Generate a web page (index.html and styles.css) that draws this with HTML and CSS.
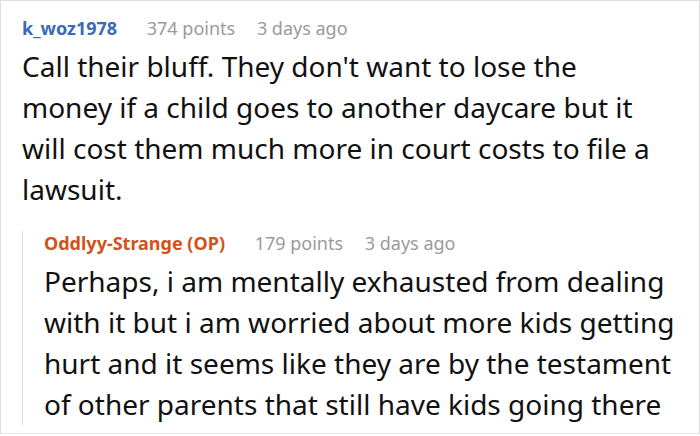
FILE: index.html
```html
<!DOCTYPE html>
<html>
<head>
<meta charset="utf-8">
<link rel="stylesheet" href="styles.css">
</head>
<body>
<div class="frame">
  <div class="comment">
    <div class="meta">
      <span class="user">k_woz1978</span>
      <span class="points">374 points</span>
      <span class="time">3 days ago</span>
    </div>
    <p class="text">Call their bluff. They don't want to lose the money if a child goes to another daycare but it will cost them much more in court costs to file a lawsuit.</p>
  </div>
  <div class="reply">
    <div class="meta">
      <span class="user op">Oddlyy-Strange (OP)</span>
      <span class="points">179 points</span>
      <span class="time">3 days ago</span>
    </div>
    <p class="text">Perhaps, i am mentally exhausted from dealing with it but i am worried about more kids getting hurt and it seems like they are by the testament of other parents that still have kids going there</p>
  </div>
</div>
</body>
</html>
```

FILE: styles.css
```css
html, body {
  margin: 0;
  padding: 0;
  background: #fff;
}
.frame {
  box-sizing: border-box;
  width: 700px;
  height: 434px;
  border: 1px solid #dedede;
  border-bottom-color: #e6e6e6;
  padding: 14px 20px 0 21px;
  overflow: hidden;
  font-family: "Noto Sans", "Open Sans", sans-serif;
}
.meta {
  font-size: 18px;
  line-height: 24px;
  color: #9a9a9a;
  white-space: nowrap;
}
.user {
  font-weight: bold;
  color: #3a6bb6;
  margin-right: 25px;
}
.user.op {
  color: #d2521b;
}
.points {
  margin-right: 17px;
}
.text {
  margin: 6px 0 0;
  font-size: 28px;
  line-height: 41px;
  color: #111;
}
.comment .meta {
  padding-top: 0.5px;
}
.comment .text {
  max-width: 646px;
}
.reply {
  margin-top: 33px;
  border-left: 1px solid #dcdcdc;
  padding-left: 21px;
}
.reply .meta {
  margin-top: -12px;
}
.reply .text {
  margin-bottom: -6px;
}
```
